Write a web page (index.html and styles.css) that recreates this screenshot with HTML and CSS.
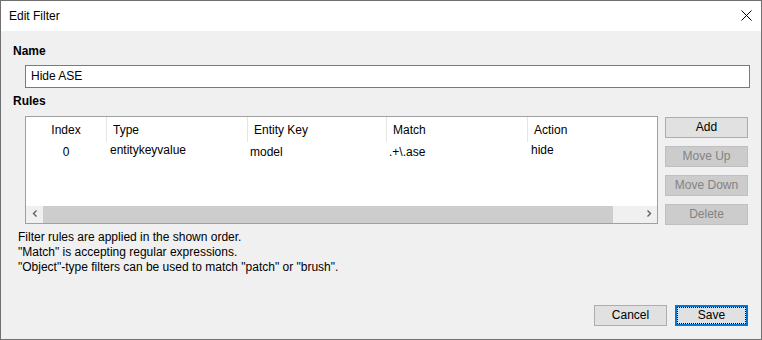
FILE: index.html
```html
<!DOCTYPE html>
<html lang="en">
<head>
  <meta charset="UTF-8" />
  <title>Edit Filter</title>
  <link rel="stylesheet" href="styles.css">
</head>
<body>
  <div class="dialog">
    <div class="titlebar">
      <span class="title">Edit Filter</span>
      <span class="close">
        <svg width="11" height="11" viewBox="0 0 11 11"><path d="M0.5 0.5 L10.5 10.5 M10.5 0.5 L0.5 10.5" stroke="#000" stroke-width="1" fill="none"/></svg>
      </span>
    </div>

    <div class="content">
      <div class="label">Name</div>
      <div class="textbox">Hide ASE</div>

      <div class="label rules-label">Rules</div>
      <div class="rules">
        <div class="listview">
          <div class="lv-header">
            <div class="col-index">Index</div>
            <div>Type</div>
            <div>Entity Key</div>
            <div>Match</div>
            <div>Action</div>
          </div>
          <div class="lv-row">
            <div class="col-index">0</div>
            <div class="raised">entitykeyvalue</div>
            <div>model</div>
            <div>.+\.ase</div>
            <div class="raised">hide</div>
          </div>
          <div class="lv-fill"></div>
          <div class="hscroll">
            <div class="sb-arrow">
              <svg width="17" height="17" viewBox="0 0 17 17"><polyline points="10.5,4.5 7.5,7.5 10.5,10.5" stroke="#606060" stroke-width="1.4" fill="none"/></svg>
            </div>
            <div class="sb-track"><div class="sb-thumb"></div></div>
            <div class="sb-arrow">
              <svg width="17" height="17" viewBox="0 0 17 17"><polyline points="7.5,4.5 10.5,7.5 7.5,10.5" stroke="#606060" stroke-width="1.4" fill="none"/></svg>
            </div>
          </div>
        </div>

        <div class="side-buttons">
          <button class="btn">Add</button>
          <button class="btn" disabled>Move Up</button>
          <button class="btn" disabled>Move Down</button>
          <button class="btn" disabled>Delete</button>
        </div>
      </div>

      <div class="notes">
        Filter rules are applied in the shown order.<br>
        "Match" is accepting regular expressions.<br>
        "Object"-type filters can be used to match "patch" or "brush".
      </div>

      <div class="footer">
        <button class="btn">Cancel</button>
        <button class="btn default">Save</button>
      </div>
    </div>
  </div>
</body>
</html>
```

FILE: styles.css
```css
body {
  margin: 0;
  font-family: "Liberation Sans", Arial, sans-serif;
  font-size: 12px;
  color: #000;
  background: #f0f0f0;
}

.dialog {
  width: 762px;
  height: 340px;
  box-sizing: border-box;
  border: 1px solid #707070;
  display: flex;
  flex-direction: column;
}

.titlebar {
  height: 30px;
  background: #fff;
  display: flex;
  justify-content: space-between;
  padding: 0 9px 0 8px;
  line-height: 30px;
}

.close {
  margin-top: 9px;
  height: 11px;
  line-height: 0;
}

.content {
  flex: 1;
  display: flex;
  flex-direction: column;
  background: #f0f0f0;
  padding: 13px 11px 13px 12px;
}

.label {
  font-weight: bold;
  line-height: 15px;
}

.rules-label {
  margin-top: 6px;
}

.textbox {
  margin: 6px 0 0 12px;
  height: 23px;
  box-sizing: border-box;
  border: 1px solid #7a7a7a;
  background: #fff;
  padding-left: 5px;
  line-height: 21px;
}

.rules {
  display: flex;
  gap: 7px;
  margin: 7px 0 0 12px;
}

.listview {
  width: 633px;
  height: 108px;
  box-sizing: border-box;
  border: 1px solid #a0a0a0;
  background: #fff;
  display: flex;
  flex-direction: column;
  overflow: hidden;
}

.lv-header,
.lv-row {
  display: grid;
  grid-template-columns: 80px 141px 139px 141px 200px;
}

.lv-header > div {
  height: 25px;
  box-sizing: border-box;
  padding: 2px 0 0 6px;
  line-height: 23px;
  border-left: 1px solid #e5e5e5;
}

.lv-header > .col-index {
  border-left: none;
  padding-left: 0;
}

.lv-row > div {
  padding: 3px 0 0 3px;
  line-height: 15px;
}

.lv-row > .raised {
  padding-top: 1px;
  padding-left: 4px;
}

.lv-header > .col-index,
.lv-row > .col-index {
  text-align: center;
  padding-left: 0;
}

.lv-fill {
  flex: 1;
}

.hscroll {
  height: 17px;
  display: flex;
  background: #f0f0f0;
}

.sb-arrow {
  width: 17px;
  height: 17px;
  line-height: 0;
}

.sb-track {
  flex: 1;
}

.sb-thumb {
  width: 570px;
  height: 17px;
  background: #cdcdcd;
}

.side-buttons {
  width: 83px;
  margin-top: 1px;
  display: flex;
  flex-direction: column;
  gap: 8px;
}

.btn {
  height: 21px;
  box-sizing: border-box;
  margin: 0;
  padding: 0;
  border: 1px solid #adadad;
  background: #e1e1e1;
  font-family: "Liberation Sans", Arial, sans-serif;
  font-size: 12px;
  color: #000;
  line-height: 19px;
}

.btn:disabled {
  background: #cccccc;
  border-color: #bfbfbf;
  color: #838383;
}

.notes {
  margin-top: 5px;
  padding-left: 5px;
  line-height: 15px;
}

.footer {
  margin-top: auto;
  display: flex;
  justify-content: flex-end;
  gap: 8px;
  padding-right: 2px;
}

.footer .btn {
  width: 73px;
}

.btn.default {
  border: 2px solid #0078d7;
  line-height: 17px;
  outline: 1px dotted #000;
  outline-offset: -3px;
}
```
